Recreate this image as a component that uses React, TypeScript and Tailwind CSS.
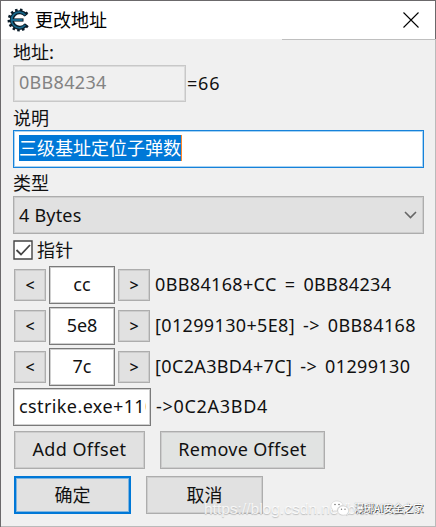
import React from "react";

const latin = "font-['Noto_Sans','Noto_Sans_CJK_SC',sans-serif]";
const cjk = "font-['Noto_Sans_CJK_SC',sans-serif]";
const buttonEdge = "border border-[#adadad] shadow-[inset_0_0_0_1px_#cdcdcd]";

function GearIcon() {
  const teeth = [12, 48, 129, 156, 183, 210, 237, 264, 291, 318, 345];
  return (
    <svg className="ml-[6px] h-[24px] w-[24px] shrink-0" viewBox="0 0 24 24" fill="none">
      <g stroke="#0b1c28" strokeWidth="2.6">
        {teeth.map((a) => (
          <path key={a} d="M12 5V.6" transform={`rotate(${a} 12 12)`} />
        ))}
      </g>
      <path d="M19 7.400A7.800 7.800 0 1 0 19 16.600" stroke="#0b1c28" strokeWidth="4" />
      <path d="M4.500 12H16.500" stroke="#0b1c28" strokeWidth="3.200" />
      <path d="M18.300 7A7.800 7.800 0 1 0 18.300 17M4.500 12H15.500" stroke="#17698c" strokeWidth="1.800" />
    </svg>
  );
}

function Arrow({ children }: { children: string }) {
  return (
    <button className={`h-[32px] w-[32px] shrink-0 bg-[#e1e1e1] text-[16px] leading-[30px] font-medium ${buttonEdge}`}>
      {children}
    </button>
  );
}

function OffsetRow({ value, result }: { value: string; result: string }) {
  return (
    <div className="mb-[3px] flex h-[38px] items-center pl-[1px]">
      <Arrow>&lt;</Arrow>
      <div className="ml-[3px] h-[38px] w-[66px] shrink-0 border border-[#7a7a7a] bg-white text-center leading-[34px] shadow-[inset_0_0_0_1px_#d0d0d0]">{value}</div>
      <div className="ml-[3px] flex">
        <Arrow>&gt;</Arrow>
      </div>
      <span className="-mt-[1px] ml-[5px] tracking-[0.35px] [word-spacing:3px] whitespace-pre">{result}</span>
    </div>
  );
}

export default function App() {
  return (
    <div className={`relative flex h-[527px] w-[436px] flex-col overflow-hidden border-t border-l border-[#6b696b] bg-[#f0f0f0] text-[18px] text-[#111] ${latin}`}>
      <header className="flex h-[38px] shrink-0 items-center bg-white">
        <GearIcon />
        <h1 className={`-mt-[2px] ml-[4px] text-[18px] leading-[36px] font-normal text-black ${cjk}`}>更改地址</h1>
        <svg className="mr-[17px] ml-auto h-[16px] w-[16px]" viewBox="0 0 16 16">
          <path d="M.5.5l15 15M15.5.5l-15 15" stroke="#000" strokeWidth="1.1" />
        </svg>
      </header>
      <main className="flex flex-col pl-[12px]">
        <div className={`h-[26px] leading-[25px] ${cjk}`}>地址:</div>
        <div className="flex h-[38px] items-start">
          <div className="h-[37px] w-[173px] border border-[#c8c8c8] pl-[5px] leading-[33px] tracking-[0.3px] text-[#838383] shadow-[inset_0_0_0_1px_#dcdcdc]">0BB84234</div>
          <span className="ml-[1px] leading-[37px] tracking-[0.8px]">=66</span>
        </div>
        <div className={`h-[27px] leading-[28px] ${cjk}`}>说明</div>
        <div className="h-[38px] w-[411px] border border-[#1682da] bg-white pt-[4px] pl-[5px] shadow-[inset_0_0_0_1px_#a8d3f3]">
          <span className={`block h-[26px] w-[163px] border-r border-[#ff8728] bg-[#0078d7] leading-[25px] whitespace-nowrap text-white ${cjk}`}>三级基址定位子弹数</span>
        </div>
        <div className={`h-[28px] leading-[29px] ${cjk}`}>类型</div>
        <div className={`flex h-[38px] w-[411px] items-center bg-[#e1e1e1] pr-[6px] pl-[5px] ${buttonEdge}`}>
          <span className="tracking-[0.2px]">4 Bytes</span>
          <svg className="ml-auto h-[8px] w-[13px]" viewBox="0 0 13 8" fill="none">
            <path d="M1 1l5.500 5.500L12 1" stroke="#666" strokeWidth="1.6" />
          </svg>
        </div>
        <div className={`flex h-[32px] items-center ${cjk}`}>
          <svg className="h-[20px] w-[20px]" viewBox="0 0 20 20" fill="none">
            <path d="M1 1h18v18H1z" fill="#fff" stroke="#444" strokeWidth="1.4" />
            <path d="M3.500 10l4.500 4.500L17 5" stroke="#444" strokeWidth="1.8" />
          </svg>
          <span className="-mt-[1px] ml-[4px]">指针</span>
        </div>
        <OffsetRow value="cc" result="0BB84168+CC = 0BB84234" />
        <OffsetRow value="5e8" result="[01299130+5E8] -> 0BB84168" />
        <OffsetRow value="7c" result="[0C2A3BD4+7C] -> 01299130" />
        <div className="-mt-[1px] flex h-[38px] items-center">
          <div className="h-[38px] w-[138px] border border-[#7a7a7a] bg-white px-[5px] leading-[34px] shadow-[inset_0_0_0_1px_#d0d0d0]">
            <div className="w-[127px] overflow-hidden tracking-[0.4px] whitespace-nowrap">cstrike.exe+110</div>
          </div>
          <span className="-mt-[1px] ml-[5px] tracking-[0.7px]">-&gt;0C2A3BD4</span>
        </div>
        <div className="mt-[5px] ml-[1px] flex gap-[15px]">
          <button className={`h-[38px] w-[131px] bg-[#e1e1e1] pb-[1px] tracking-[0.4px] ${buttonEdge}`}>Add Offset</button>
          <button className={`h-[38px] w-[165px] bg-[#e1e3e2] pb-[1px] tracking-[0.3px] ${buttonEdge}`}>Remove Offset</button>
        </div>
        <div className={`mt-[7px] ml-[1px] flex gap-[15px] ${cjk}`}>
          <button className="h-[38px] w-[117px] border-2 border-[#0078d7] bg-[#e1e1e1] pb-[1px] shadow-[inset_0_0_0_1px_#7fb5e0]">确定</button>
          <button className={`h-[38px] w-[117px] bg-[#e1e1e1] pb-[1px] ${buttonEdge}`}>取消</button>
        </div>
      </main>
      <div className="absolute top-[38px] right-0 bottom-0 w-px bg-[#bababa]" />
      <div className="absolute top-0 right-0 h-[38px] w-px bg-[#6b696b]" />
      <div className="absolute top-[38px] right-0 h-px w-[154px] bg-[#bfbfbf]" />
      <div className="absolute right-0 bottom-0 left-0 h-px bg-[#bababa]" />
      <div className="absolute top-[498px] left-[203px] font-['Liberation_Sans',sans-serif] text-[15.5px] leading-[20px] whitespace-nowrap text-white/80 [text-shadow:0_1px_1px_#bdbdbd]">https://blog.csdn.net/blacknet</div>
      <svg className="absolute top-[499px] left-[329px] h-[17px] w-[20px]" viewBox="0 0 20 17">
        <path d="M7 1C3.3 1 1 3.2 1 6c0 1.7.8 3 2 3.8L2.5 12l2.3-1.2c.8.2 1.5.3 2.4.2C7 7.500 10 5.200 13.200 5.300 12.500 2.700 10 1 7 1z" fill="#fff" stroke="#c8c8c8" strokeWidth=".5" />
        <path d="M13.200 6c-3 0-5.500 2-5.500 4.600s2.300 4.600 5.500 4.600c.7 0 1.400-.1 2-.3l1.900 1-.5-1.700c1.300-.9 2-2.100 2-3.600C18.600 8 16.200 6 13.200 6z" fill="#fff" stroke="#b8b8b8" strokeWidth=".5" />
        <g fill="#777">
          <circle cx="5" cy="4.500" r=".8" />
          <circle cx="9" cy="4.500" r=".8" />
          <circle cx="11.500" cy="9.300" r=".7" />
          <circle cx="15" cy="9.300" r=".7" />
        </g>
      </svg>
      <div className={`absolute top-[498px] left-[353px] text-[10px] leading-[18px] font-medium whitespace-nowrap text-white [text-shadow:1px_1px_0_#555,0_0_1px_#777] ${cjk}`}>瀑琊AI安全之家</div>
    </div>
  );
}
